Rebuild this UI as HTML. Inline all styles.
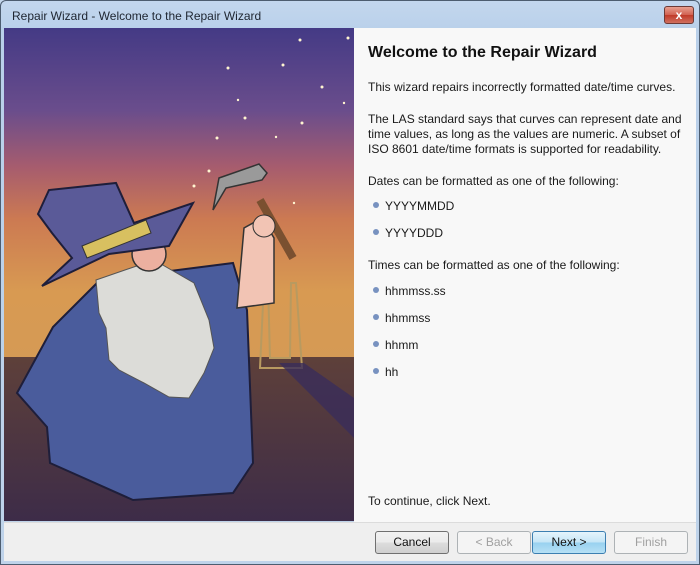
<!DOCTYPE html>
<html><head><style>
*{margin:0;padding:0;box-sizing:border-box}
body{width:700px;height:565px;overflow:hidden;background:#c4d7ec;font-family:"Liberation Sans",sans-serif;position:relative}
.frame{position:absolute;left:0;top:0;width:700px;height:565px;border:1px solid #4d5d70;border-radius:6px 6px 0 0;background:linear-gradient(#c3d7ee,#b9d0ea 30px,#bfd3ea)}
.title{position:absolute;left:12px;top:9px;font-size:12px;color:#1e2530}
.close{position:absolute;left:664px;top:6px;width:30px;height:18px;border:1px solid #6d3a36;border-radius:3px;background:linear-gradient(#e8a090,#d06050 50%,#c03a28 51%,#d07060);color:#fff;font-size:12px;font-weight:bold;text-align:center;line-height:16px}
.img{position:absolute;left:4px;top:28px;width:350px;height:493px}
.panel{position:absolute;left:354px;top:28px;width:342px;height:494px;background:#f8f8f8}
.bottom{position:absolute;left:4px;top:522px;width:692px;height:39px;background:#efefef;border-top:1px solid #dcdcdc}
.t{position:absolute;left:368px;font-size:12px;color:#1a1a1a;white-space:nowrap}
h1{position:absolute;left:368px;top:44px;font-size:16px;font-weight:bold;color:#111}
.b{position:absolute;left:373px;width:6px;height:6px;border-radius:50%;background:#7892c0}
.btn{position:absolute;top:531px;width:74px;height:23px;border:1px solid #707070;border-radius:3px;background:linear-gradient(#f2f2f2,#ebebeb 50%,#dddddd 51%,#cfcfcf);font-size:12px;text-align:center;line-height:21px;color:#111}
.dis{border-color:#adb2b5;background:#f4f4f4;color:#a0a0a0}
.nx{border-color:#3c7fb1;background:linear-gradient(#e5f4fc,#c4e5f6 50%,#98d1ef 51%,#b6e0f5)}
</style></head><body>
<div class="frame"></div>
<div class="title">Repair Wizard - Welcome to the Repair Wizard</div>
<div class="close">x</div>
<svg class="img" width="350" height="493" viewBox="0 0 350 493">
<defs>
<linearGradient id="sky" x1="0" y1="0" x2="0" y2="1">
<stop offset="0" stop-color="#443a85"/><stop offset="0.25" stop-color="#6a4d8c"/><stop offset="0.42" stop-color="#a65c6e"/><stop offset="0.58" stop-color="#cc7a52"/><stop offset="0.8" stop-color="#d89a52"/><stop offset="1" stop-color="#d59a55"/>
</linearGradient>
<linearGradient id="gr" x1="0" y1="0" x2="0" y2="1"><stop offset="0" stop-color="#5e403a"/><stop offset="1" stop-color="#3d2c48"/></linearGradient>
</defs>
<rect width="350" height="330" fill="url(#sky)"/>
<rect y="329" width="350" height="164" fill="url(#gr)"/>
<g fill="#fff5d0">
<circle cx="296" cy="12" r="1.5"/><circle cx="344" cy="10" r="1.5"/><circle cx="224" cy="40" r="1.5"/><circle cx="279" cy="37" r="1.5"/><circle cx="318" cy="59" r="1.5"/><circle cx="241" cy="90" r="1.5"/><circle cx="298" cy="95" r="1.5"/><circle cx="213" cy="110" r="1.5"/><circle cx="272" cy="109" r="1.2"/><circle cx="205" cy="143" r="1.5"/><circle cx="190" cy="158" r="1.5"/><circle cx="290" cy="175" r="1.2"/><circle cx="234" cy="72" r="1.2"/><circle cx="340" cy="75" r="1.2"/>
</g>
<polygon points="260,255 264,255 266,330 286,330 287,255 292,255 298,340 256,340" fill="none" stroke="#b89a60" stroke-width="2"/>
<polygon points="275,335 300,335 350,370 350,410" fill="#3a2d5a" opacity="0.8"/>
<path d="M13,365 L49,299 L96,252 L229,235 L243,282 L249,435 L229,465 L129,472 L46,435 L43,399 Z" fill="#4a5c9c" stroke="#1e1e3a" stroke-width="2"/>
<path d="M233,280 L240,200 L258,190 L270,210 L270,275 Z" fill="#f2c4b4" stroke="#333" stroke-width="1.5"/>
<line x1="256" y1="172" x2="289" y2="230" stroke="#7a5030" stroke-width="8"/>
<circle cx="260" cy="198" r="11" fill="#f2c4b4" stroke="#333"/>
<path d="M209,182 L215,150 L255,136 L263,145 L258,152 L222,160 Z" fill="#9a9a9a" stroke="#333" stroke-width="1.5"/>
<path d="M92,252 L150,232 L190,255 L205,292 L210,320 L200,345 L185,370 L165,369 L140,355 L115,342 L105,332 L102,300 L95,285 Z" fill="#dcdcd8" stroke="#555" stroke-width="1"/>
<circle cx="145" cy="226" r="17" fill="#ecb0a0" stroke="#333" stroke-width="1.5"/>
<path d="M34,186 L45,162 L112,155 L130,195 L189,175 L165,218 L105,226 L38,258 L68,230 L48,205 Z" fill="#5a5a98" stroke="#1e1e3a" stroke-width="2"/>
<path d="M78,218 L142,192 L147,205 L83,230 Z" fill="#d8c060" stroke="#333"/>
</svg>
<div class="panel"></div>
<h1>Welcome to the Repair Wizard</h1>
<div class="t" style="top:80px">This wizard repairs incorrectly formatted date/time curves.</div>
<div class="t" style="top:112px;line-height:15px">The LAS standard says that curves can represent date and<br>time values, as long as the values are numeric. A subset of<br>ISO 8601 date/time formats is supported for readability.</div>
<div class="t" style="top:174px">Dates can be formatted as one of the following:</div>
<div class="b" style="top:202px"></div><div class="t" style="left:385px;top:199px">YYYYMMDD</div>
<div class="b" style="top:229px"></div><div class="t" style="left:385px;top:226px">YYYYDDD</div>
<div class="t" style="top:258px">Times can be formatted as one of the following:</div>
<div class="b" style="top:287px"></div><div class="t" style="left:385px;top:284px">hhmmss.ss</div>
<div class="b" style="top:314px"></div><div class="t" style="left:385px;top:311px">hhmmss</div>
<div class="b" style="top:341px"></div><div class="t" style="left:385px;top:338px">hhmm</div>
<div class="b" style="top:368px"></div><div class="t" style="left:385px;top:365px">hh</div>
<div class="t" style="top:494px">To continue, click Next.</div>
<div class="bottom"></div>
<div class="btn" style="left:375px">Cancel</div>
<div class="btn dis" style="left:457px">&lt; Back</div>
<div class="btn nx" style="left:532px">Next &gt;</div>
<div class="btn dis" style="left:614px">Finish</div>
</body></html>
